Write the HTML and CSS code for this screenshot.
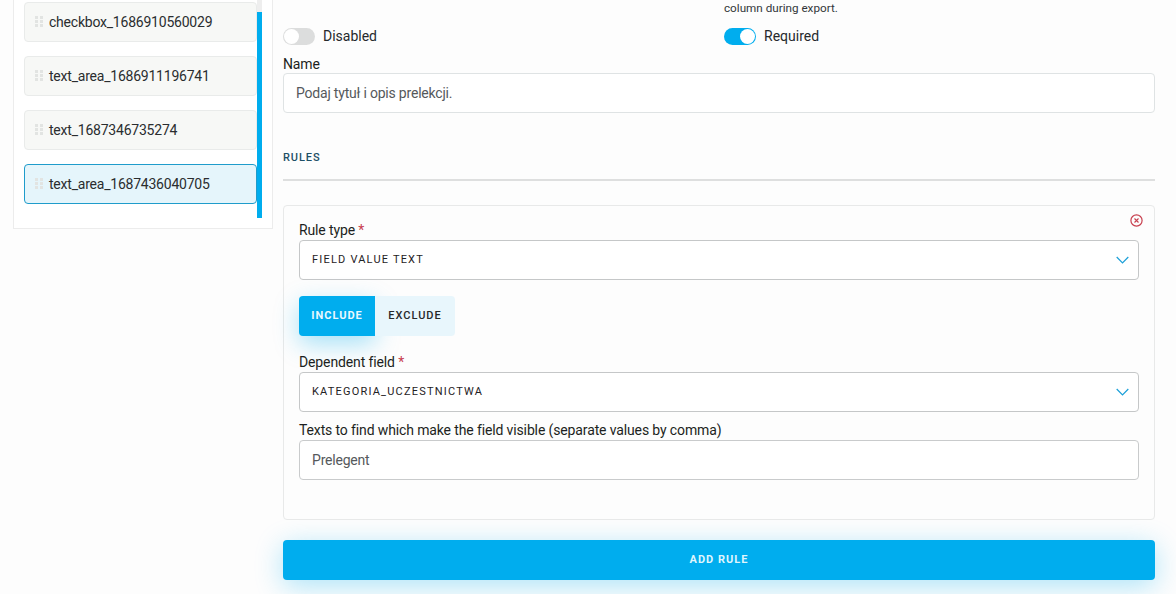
FILE: index.html
```html
<!DOCTYPE html>
<html lang="en">
<head>
<meta charset="utf-8">
<title>Form field rules</title>
<link rel="stylesheet" href="styles.css">
</head>
<body>
<div class="page">
  <aside class="sidebar">
    <div class="list">
      <div class="item"><span class="grip"><i></i><i></i><i></i><i></i><i></i><i></i></span>checkbox_1686910560029</div>
      <div class="item"><span class="grip"><i></i><i></i><i></i><i></i><i></i><i></i></span>text_area_1686911196741</div>
      <div class="item"><span class="grip"><i></i><i></i><i></i><i></i><i></i><i></i></span>text_1687346735274</div>
      <div class="item active"><span class="grip"><i></i><i></i><i></i><i></i><i></i><i></i></span>text_area_1687436040705</div>
    </div>
    <div class="scroll"><div class="thumb"></div></div>
  </aside>
  <main class="main">
    <div class="toggles">
      <div class="toggle-col">
        <label class="toggle-row"><span class="switch"></span>Disabled</label>
      </div>
      <div class="toggle-col">
        <p class="hint">column during export.</p>
        <label class="toggle-row"><span class="switch on"></span>Required</label>
      </div>
    </div>
    <div class="label name-label">Name</div>
    <div class="input">Podaj tytuł i opis prelekcji.</div>
    <h2 class="section">RULES</h2>
    <div class="rule">
      <svg class="remove" viewBox="0 0 13 13" width="13" height="13" aria-hidden="true"><circle cx="6.5" cy="6.5" r="5.6" fill="none" stroke="#c8404f" stroke-width="1.2"/><path d="M4.5 4.5l4 4M8.5 4.5l-4 4" stroke="#c8404f" stroke-width="1.1" fill="none"/></svg>
      <div class="label">Rule type <span class="req">*</span></div>
      <div class="select"><span class="select-text">FIELD VALUE TEXT</span><svg class="chev" viewBox="0 0 13 8" width="13" height="8" aria-hidden="true"><path d="M0.7 1l5.8 6 5.8-6" fill="none" stroke="#1a9fd8" stroke-width="1.2"/></svg></div>
      <div class="segmented">
        <button class="seg seg-on">INCLUDE</button><button class="seg">EXCLUDE</button>
      </div>
      <div class="label">Dependent field <span class="req">*</span></div>
      <div class="select"><span class="select-text">KATEGORIA_UCZESTNICTWA</span><svg class="chev" viewBox="0 0 13 8" width="13" height="8" aria-hidden="true"><path d="M0.7 1l5.8 6 5.8-6" fill="none" stroke="#1a9fd8" stroke-width="1.2"/></svg></div>
      <div class="label texts-label">Texts to find which make the field visible (separate values by comma)</div>
      <div class="input strong">Prelegent</div>
    </div>
    <button class="add">ADD RULE</button>
  </main>
</div>
</body>
</html>
```
FILE: styles.css
```css
* { box-sizing: border-box; }
html, body { margin: 0; height: 100%; }
body {
  background: #fdfdfd;
  font-family: Roboto, "Liberation Sans", sans-serif;
  color: #1f2326;
  overflow: hidden;
}
.page {
  display: flex;
  align-items: flex-start;
  height: 594px;
  overflow: hidden;
  padding-left: 13px;
}
.sidebar {
  position: relative;
  width: 260px;
  height: 229px;
  flex: none;
  background: #fff;
  border: 1px solid #ececec;
  border-top: 0;
  padding: 2px 15px 0 10px;
}
.list { display: flex; flex-direction: column; gap: 14px; }
.item {
  display: flex;
  align-items: center;
  height: 40px;
  width: 233px;
  padding-left: 10px;
  background: #f7f8f6;
  border: 1px solid #e9ebea;
  border-radius: 4px;
  font-size: 14px;
  letter-spacing: -0.22px;
  color: #2a2d2f;
}
.item.active {
  background: #e5f5fb;
  border-color: #1f9ccb;
}
.grip {
  display: grid;
  grid-template-columns: 3px 3px;
  grid-auto-rows: 3px;
  gap: 1px 2px;
  margin: -2px 6px 0 0;
  width: 8px;
}
.grip i { background: #e2e4e2; display: block; }
.scroll {
  position: absolute;
  left: 243px;
  top: 0;
  width: 5px;
  height: 218px;
  background: #eeeeee;
  padding-top: 12px;
}
.thumb { height: 206px; background: #00adee; }
.main {
  width: 872px;
  margin-left: 10px;
  flex: none;
}
.toggles { display: flex; height: 46px; }
.toggle-col { width: 441px; flex: none; display: flex; flex-direction: column; justify-content: flex-end; }
.hint { margin: 0 0 12px; font-size: 11.7px; line-height: 14px; color: #33373a; }
.toggle-row { display: flex; align-items: center; gap: 8px; font-size: 14px; height: 18px; margin-bottom: 1px; color: #26292c; }
.switch {
  position: relative;
  display: block;
  width: 32px;
  height: 17px;
  border-radius: 9px;
  background: #dcdddd;
  flex: none;
}
.switch::after {
  content: "";
  position: absolute;
  left: 1px;
  top: 1px;
  width: 15px;
  height: 15px;
  border-radius: 50%;
  background: #fff;
}
.switch.on { background: #00adee; }
.switch.on::after { left: 16px; }
.label { font-size: 14px; line-height: 16px; letter-spacing: -0.13px; color: #1c1f21; }
.name-label { margin-top: 10px; margin-bottom: 1px; }
.req { color: #c8404f; }
.input {
  display: flex;
  align-items: center;
  height: 40px;
  padding-left: 12px;
  background: #fff;
  border: 1px solid #dfe3e4;
  border-radius: 4px;
  font-size: 14px;
  letter-spacing: -0.2px;
  color: #55595c;
}
.input.strong { border-color: #c9cbcc; }
.section {
  margin: 38px 0 0;
  padding-bottom: 14px;
  border-bottom: 2px solid #dedfdf;
  box-sizing: content-box;
  height: 14px;
  font-size: 11px;
  line-height: 14px;
  font-weight: 500;
  letter-spacing: 0.9px;
  color: #1d4f66;
}
.rule {
  position: relative;
  margin-top: 24px;
  height: 315px;
  padding: 16px 15px 0;
  background: #fdfdfd;
  border: 1px solid #e8e9e9;
  border-radius: 4px;
}
.remove { position: absolute; top: 8px; right: 11px; }
.select {
  display: flex;
  align-items: center;
  justify-content: space-between;
  height: 40px;
  margin-top: 2px;
  padding: 0 9px 0 12px;
  background: #fff;
  border: 1px solid #c5c7c8;
  border-radius: 4px;
  font-size: 11px;
  font-weight: 400;
  letter-spacing: 1.2px;
  color: #1f2224;
}
.select-text { margin-bottom: 2px; }
.segmented { display: flex; margin: 16px 0 18px; height: 40px; }
.seg {
  border: 0;
  width: 80px;
  height: 40px;
  padding: 0 0 2px;
  background: #e8f6fc;
  border-radius: 0 4px 4px 0;
  font: 500 11px Roboto, "Liberation Sans", sans-serif;
  letter-spacing: 1px;
  color: #25282a;
}
.seg-on {
  width: 76px;
  background: #00adee;
  border-radius: 4px 0 0 4px;
  color: #e9f8fe;
  font-weight: 700;
  box-shadow: 0 8px 24px rgba(0, 173, 238, 0.34);
}
.texts-label { margin-top: 10px; margin-bottom: 2px; }
.add {
  display: block;
  width: 100%;
  height: 40px;
  margin-top: 20px;
  padding: 0 0 2px;
  border: 0;
  border-radius: 4px;
  background: #00adee;
  color: #dff5fd;
  font: 700 11px Roboto, "Liberation Sans", sans-serif;
  letter-spacing: 1px;
  box-shadow: 0 6px 28px rgba(0, 173, 238, 0.32);
}
```
